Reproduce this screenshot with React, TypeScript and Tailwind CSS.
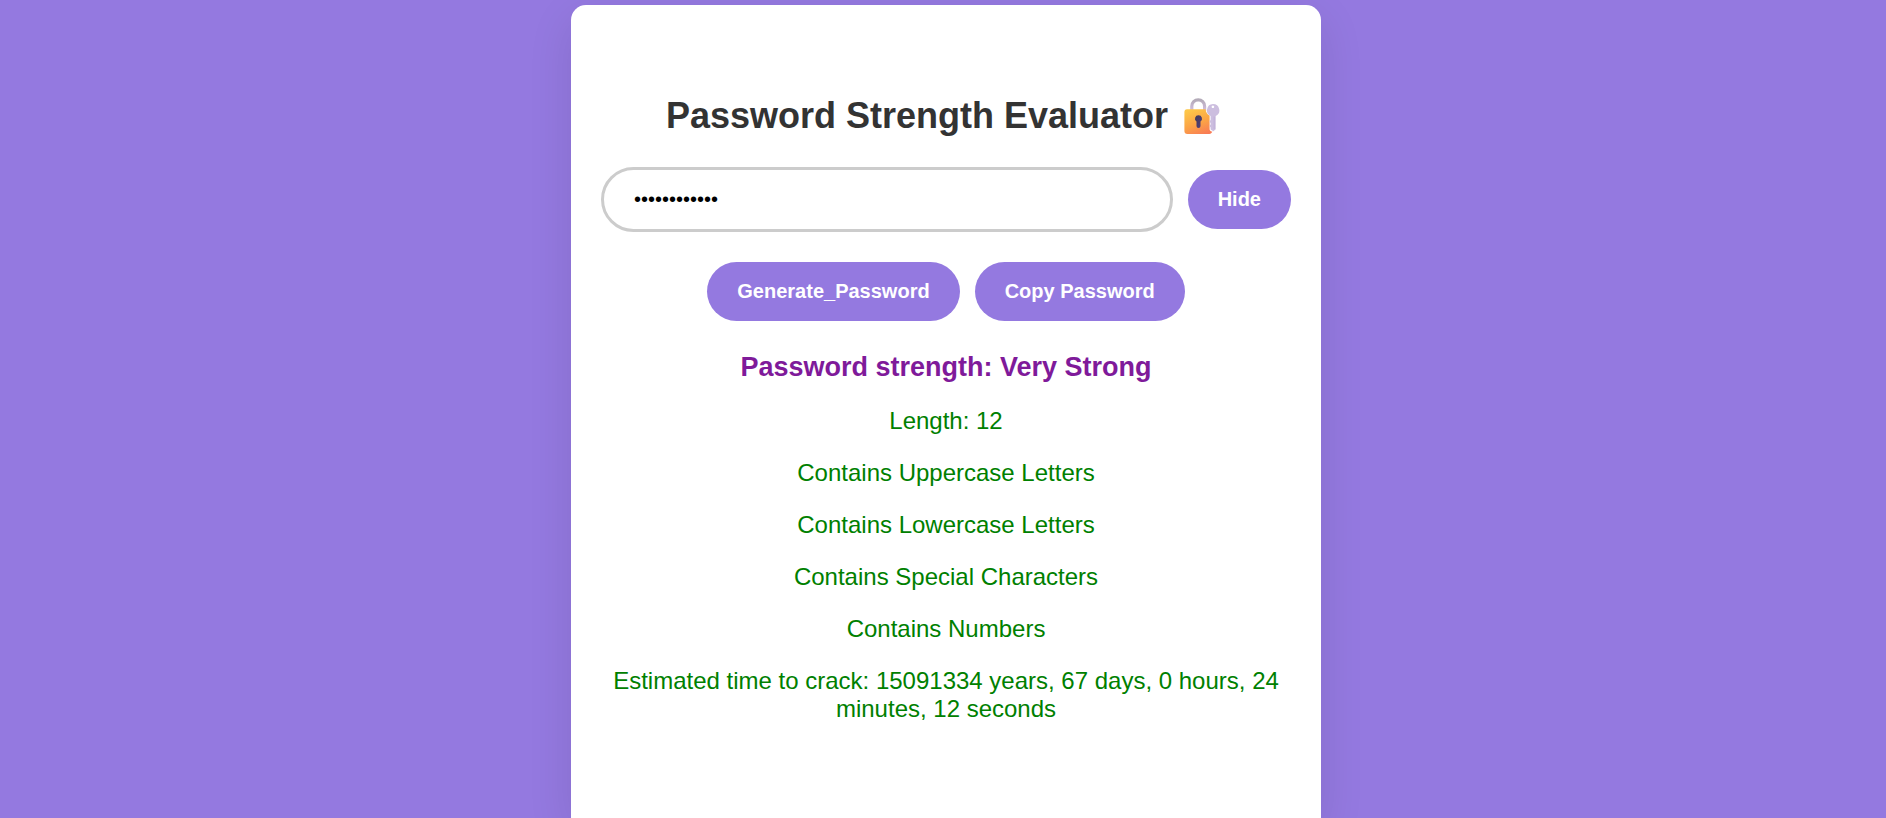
import { useState } from "react";

const checks = [
  "Length: 12",
  "Contains Uppercase Letters",
  "Contains Lowercase Letters",
  "Contains Special Characters",
  "Contains Numbers",
  "Estimated time to crack: 15091334 years, 67 days, 0 hours, 24 minutes, 12 seconds",
];

const buttonClass =
  "cursor-pointer rounded-[30px] bg-[#9479e0] px-[30px] py-[18px] text-[20px] leading-[23px] font-bold text-white";

function LockIcon() {
  return (
    <svg viewBox="0 0 36 36" className="mx-1.5 inline-block size-9 align-[-6px]" role="img" aria-label="Locked with key">
      <defs>
        <linearGradient id="body" x1="0.3" y1="0" x2="0.75" y2="1">
          <stop offset="0" stopColor="#fdc648" />
          <stop offset="0.55" stopColor="#fba346" />
          <stop offset="1" stopColor="#f97c55" />
        </linearGradient>
        <linearGradient id="shackle" x1="0" y1="0" x2="0" y2="1">
          <stop offset="0" stopColor="#b3aab8" />
          <stop offset="1" stopColor="#d5bfdf" />
        </linearGradient>
        <linearGradient id="hole" x1="0" y1="0" x2="1" y2="1">
          <stop offset="0" stopColor="#3f3857" />
          <stop offset="1" stopColor="#54407c" />
        </linearGradient>
      </defs>
      <path d="M7.8 13V8.2a6.4 6.4 0 0 1 12.8 0V13" fill="none" stroke="url(#shackle)" strokeWidth="3.2" />
      <path
        d="M3 11.2H21.6C21.8 13.8 23.2 16.2 25.6 17.6V31.5C25.8 32.8 26.8 33.6 28.3 33.6C27.9 35 26.7 36 25.4 36H3.4A3 3 0 0 1 .4 33V14A2.8 2.8 0 0 1 3 11.2Z"
        fill="url(#body)"
      />
      <path d="M14.5 17.2a3.5 3.5 0 0 1 2 6.4V28a2 2 0 0 1-4 0v-4.4a3.5 3.5 0 0 1 2-6.4Z" fill="url(#hole)" />
      <path
        fillRule="evenodd"
        d="M29 6.1a6.3 6.3 0 0 1 2.7 12V31.2L29.4 33.3L26.6 31.6V29.4L25.4 28L26.6 26.6V25L25.4 23.6L26.6 22V18.1A6.3 6.3 0 0 1 29 6.1ZM28.9 7.5a1.3 1.3 0 1 0 .01 0Z"
        fill="#ccbedf"
      />
      <path d="M30.2 18.5V31" stroke="#bdabd6" strokeWidth="0.8" />
    </svg>
  );
}

export default function App() {
  const [password, setPassword] = useState("Xk7#pQ9!vL2m");

  return (
    <div className="flex min-h-screen justify-center bg-[#9479e0] pt-[5px] pl-[6px] font-['Liberation_Sans',Arial,sans-serif]">
      <main className="w-full max-w-[750px] rounded-t-[15px] bg-white px-[30px] pt-[90px] text-center shadow-[0_15px_45px_rgba(0,0,0,0.1)]">
        <h1 className="text-[36px] leading-[42px] font-bold text-[#333333]">
          Password Strength Evaluator <LockIcon />
        </h1>
        <div className="mt-[30px] flex items-center gap-[15px]">
          <input
            type="password"
            aria-label="Password"
            value={password}
            onChange={(event) => setPassword(event.target.value)}
            className="min-w-0 flex-1 rounded-[33px] border-3 border-[#cccccc] bg-white px-[30px] py-[18px] text-[20px] leading-[23px] text-black outline-none"
          />
          <button type="button" className={buttonClass}>Hide</button>
        </div>
        <div className="mt-[30px] flex justify-center gap-[15px]">
          <button type="button" className={buttonClass}>Generate_Password</button>
          <button type="button" className={buttonClass}>Copy Password</button>
        </div>
        <p className="mt-[30px] text-[27px] leading-8 font-bold text-[#7f1a9a]">Password strength: Very Strong</p>
        <div className="mt-6 flex flex-col gap-6 text-[24px] leading-7 text-[#008000]">
          {checks.map((check) => (
            <p key={check}>{check}</p>
          ))}
        </div>
      </main>
    </div>
  );
}
